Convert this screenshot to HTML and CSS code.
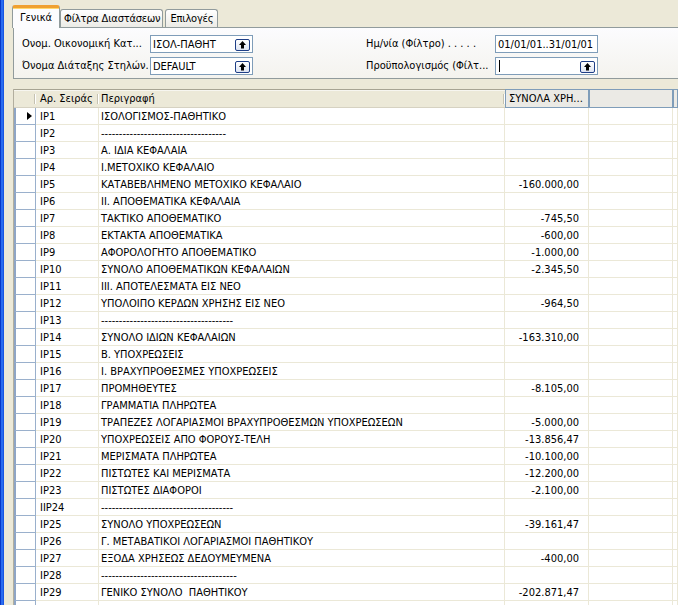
FILE: index.html
```html
<!DOCTYPE html>
<html lang="el">
<head>
<meta charset="utf-8">
<title>Λογαριασμοί</title>
<link rel="stylesheet" href="styles.css">
</head>
<body>
<div class="window">
  <div class="frame-edge"></div>
  <div class="content">
    <div class="tabs">
      <div class="tab active">Γενικά</div>
      <div class="tab">Φίλτρα Διαστάσεων</div>
      <div class="tab tab-opts">Επιλογές</div>
    </div>
    <div class="panel">
      <div class="form">
        <div class="label">Ονομ. Οικονομική Κατ...</div>
        <div class="field"><span>ΙΣΟΛ-ΠΑΘΗΤ</span><span class="lookup"><svg viewBox="0 0 13 10" width="13" height="10"><path d="M6.5 1 L10 5 H8 V8.5 H5 V5 H3 Z" fill="#000"/></svg></span></div>
        <div></div>
        <div class="label">Ημ/νία (Φίλτρο) . . . . .</div>
        <div class="field"><span>01/01/01..31/01/01</span></div>
        <div class="label">Όνομα Διάταξης Στηλών.</div>
        <div class="field"><span>DEFAULT</span><span class="lookup"><svg viewBox="0 0 13 10" width="13" height="10"><path d="M6.5 1 L10 5 H8 V8.5 H5 V5 H3 Z" fill="#000"/></svg></span></div>
        <div></div>
        <div class="label">Προϋπολογισμός (Φίλτ...</div>
        <div class="field"><span class="caret"></span><span class="lookup"><svg viewBox="0 0 13 10" width="13" height="10"><path d="M6.5 1 L10 5 H8 V8.5 H5 V5 H3 Z" fill="#000"/></svg></span></div>
      </div>
    </div>

    <div class="grid">
      <div class="row head">
        <div class="hc"><span></span><span class="sep"></span></div>
        <div class="hc"><span>Αρ. Σειράς</span><span class="sep"></span></div>
        <div class="hc"><span>Περιγραφή</span><span class="sep"></span></div>
        <div class="hbox">ΣΥΝΟΛΑ ΧΡΗ...</div>
        <div class="hbox"></div>
        <div class="hbox"></div>
      </div>

      <div class="row"><div class="sel current"><span class="marker"></span></div><div class="c">IP1</div><div class="c">ΙΣΟΛΟΓΙΣΜΟΣ-ΠΑΘΗΤΙΚΟ</div><div class="c num"></div><div class="c"></div><div class="c"></div></div>
      <div class="row"><div class="sel"></div><div class="c">IP2</div><div class="c">-----------------------------------</div><div class="c num"></div><div class="c"></div><div class="c"></div></div>
      <div class="row"><div class="sel"></div><div class="c">IP3</div><div class="c">Α. ΙΔΙΑ ΚΕΦΑΛΑΙΑ</div><div class="c num"></div><div class="c"></div><div class="c"></div></div>
      <div class="row"><div class="sel"></div><div class="c">IP4</div><div class="c">Ι.ΜΕΤΟΧΙΚΟ ΚΕΦΑΛΑΙΟ</div><div class="c num"></div><div class="c"></div><div class="c"></div></div>
      <div class="row"><div class="sel"></div><div class="c">IP5</div><div class="c">ΚΑΤΑΒΕΒΛΗΜΕΝΟ ΜΕΤΟΧΙΚΟ ΚΕΦΑΛΑΙΟ</div><div class="c num">-160.000,00</div><div class="c"></div><div class="c"></div></div>
      <div class="row"><div class="sel"></div><div class="c">IP6</div><div class="c">ΙΙ. ΑΠΟΘΕΜΑΤΙΚΑ ΚΕΦΑΛΑΙΑ</div><div class="c num"></div><div class="c"></div><div class="c"></div></div>
      <div class="row"><div class="sel"></div><div class="c">IP7</div><div class="c">ΤΑΚΤΙΚΟ ΑΠΟΘΕΜΑΤΙΚΟ</div><div class="c num">-745,50</div><div class="c"></div><div class="c"></div></div>
      <div class="row"><div class="sel"></div><div class="c">IP8</div><div class="c">ΕΚΤΑΚΤΑ ΑΠΟΘΕΜΑΤΙΚΑ</div><div class="c num">-600,00</div><div class="c"></div><div class="c"></div></div>
      <div class="row"><div class="sel"></div><div class="c">IP9</div><div class="c">ΑΦΟΡΟΛΟΓΗΤΟ ΑΠΟΘΕΜΑΤΙΚΟ</div><div class="c num">-1.000,00</div><div class="c"></div><div class="c"></div></div>
      <div class="row"><div class="sel"></div><div class="c">IP10</div><div class="c">ΣΥΝΟΛΟ ΑΠΟΘΕΜΑΤΙΚΩΝ ΚΕΦΑΛΑΙΩΝ</div><div class="c num">-2.345,50</div><div class="c"></div><div class="c"></div></div>
      <div class="row"><div class="sel"></div><div class="c">IP11</div><div class="c">ΙΙΙ. ΑΠΟΤΕΛΕΣΜΑΤΑ ΕΙΣ ΝΕΟ</div><div class="c num"></div><div class="c"></div><div class="c"></div></div>
      <div class="row"><div class="sel"></div><div class="c">IP12</div><div class="c">ΥΠΟΛΟΙΠΟ ΚΕΡΔΩΝ ΧΡΗΣΗΣ ΕΙΣ ΝΕΟ</div><div class="c num">-964,50</div><div class="c"></div><div class="c"></div></div>
      <div class="row"><div class="sel"></div><div class="c">IP13</div><div class="c">-------------------------------------</div><div class="c num"></div><div class="c"></div><div class="c"></div></div>
      <div class="row"><div class="sel"></div><div class="c">IP14</div><div class="c">ΣΥΝΟΛΟ ΙΔΙΩΝ ΚΕΦΑΛΑΙΩΝ</div><div class="c num">-163.310,00</div><div class="c"></div><div class="c"></div></div>
      <div class="row"><div class="sel"></div><div class="c">IP15</div><div class="c">Β. ΥΠΟΧΡΕΩΣΕΙΣ</div><div class="c num"></div><div class="c"></div><div class="c"></div></div>
      <div class="row"><div class="sel"></div><div class="c">IP16</div><div class="c">Ι. ΒΡΑΧΥΠΡΟΘΕΣΜΕΣ ΥΠΟΧΡΕΩΣΕΙΣ</div><div class="c num"></div><div class="c"></div><div class="c"></div></div>
      <div class="row"><div class="sel"></div><div class="c">IP17</div><div class="c">ΠΡΟΜΗΘΕΥΤΕΣ</div><div class="c num">-8.105,00</div><div class="c"></div><div class="c"></div></div>
      <div class="row"><div class="sel"></div><div class="c">IP18</div><div class="c">ΓΡΑΜΜΑΤΙΑ ΠΛΗΡΩΤΕΑ</div><div class="c num"></div><div class="c"></div><div class="c"></div></div>
      <div class="row"><div class="sel"></div><div class="c">IP19</div><div class="c">ΤΡΑΠΕΖΕΣ ΛΟΓΑΡΙΑΣΜΟΙ ΒΡΑΧΥΠΡΟΘΕΣΜΩΝ ΥΠΟΧΡΕΩΣΕΩΝ</div><div class="c num">-5.000,00</div><div class="c"></div><div class="c"></div></div>
      <div class="row"><div class="sel"></div><div class="c">IP20</div><div class="c">ΥΠΟΧΡΕΩΣΕΙΣ ΑΠΟ ΦΟΡΟΥΣ-ΤΕΛΗ</div><div class="c num">-13.856,47</div><div class="c"></div><div class="c"></div></div>
      <div class="row"><div class="sel"></div><div class="c">IP21</div><div class="c">ΜΕΡΙΣΜΑΤΑ ΠΛΗΡΩΤΕΑ</div><div class="c num">-10.100,00</div><div class="c"></div><div class="c"></div></div>
      <div class="row"><div class="sel"></div><div class="c">IP22</div><div class="c">ΠΙΣΤΩΤΕΣ ΚΑΙ ΜΕΡΙΣΜΑΤΑ</div><div class="c num">-12.200,00</div><div class="c"></div><div class="c"></div></div>
      <div class="row"><div class="sel"></div><div class="c">IP23</div><div class="c">ΠΙΣΤΩΤΕΣ ΔΙΑΦΟΡΟΙ</div><div class="c num">-2.100,00</div><div class="c"></div><div class="c"></div></div>
      <div class="row"><div class="sel"></div><div class="c">IIP24</div><div class="c">-------------------------------------</div><div class="c num"></div><div class="c"></div><div class="c"></div></div>
      <div class="row"><div class="sel"></div><div class="c">IP25</div><div class="c">ΣΥΝΟΛΟ ΥΠΟΧΡΕΩΣΕΩΝ</div><div class="c num">-39.161,47</div><div class="c"></div><div class="c"></div></div>
      <div class="row"><div class="sel"></div><div class="c">IP26</div><div class="c">Γ. ΜΕΤΑΒΑΤΙΚΟΙ ΛΟΓΑΡΙΑΣΜΟΙ ΠΑΘΗΤΙΚΟΥ</div><div class="c num"></div><div class="c"></div><div class="c"></div></div>
      <div class="row"><div class="sel"></div><div class="c">IP27</div><div class="c">ΕΞΟΔΑ ΧΡΗΣΕΩΣ ΔΕΔΟΥΜΕΥΜΕΝΑ</div><div class="c num">-400,00</div><div class="c"></div><div class="c"></div></div>
      <div class="row"><div class="sel"></div><div class="c">IP28</div><div class="c">--------------------------------------</div><div class="c num"></div><div class="c"></div><div class="c"></div></div>
      <div class="row"><div class="sel"></div><div class="c">IP29</div><div class="c">ΓΕΝΙΚΟ ΣΥΝΟΛΟ&nbsp; ΠΑΘΗΤΙΚΟΥ</div><div class="c num">-202.871,47</div><div class="c"></div><div class="c"></div></div>
      <div class="row"><div class="sel"></div><div class="c"></div><div class="c"></div><div class="c num"></div><div class="c"></div><div class="c"></div></div>
    </div>
  </div>
</div>
</body>
</html>
```

FILE: styles.css
```css
html, body {
  margin: 0;
  padding: 0;
}

body {
  width: 678px;
  height: 605px;
  overflow: hidden;
  background: #ECE9D8;
  color: #000;
  font-family: "DejaVu Sans Condensed", "DejaVu Sans", "Liberation Sans", sans-serif;
  font-stretch: condensed;
  font-size: 11px;
}

.window {
  display: flex;
  height: 605px;
}

.frame-edge {
  flex: none;
  width: 4px;
  background: linear-gradient(90deg, #0838C8 0, #0838C8 1px, #2A6CF0 1px, #2A6CF0 3px, #1856E2 3px);
}

.content {
  flex: 1;
  min-width: 0;
  padding: 5px 0 0 9px;
}

/* Tabs */
.tabs {
  display: flex;
  align-items: flex-end;
  height: 23px;
  margin: 0 0 -1px -1px;
}

.tab {
  box-sizing: border-box;
  height: 18px;
  margin: 0 1px 1px 0;
  padding: 2px 2px 0 3px;
  border: 1px solid #919B9C;
  border-bottom: none;
  border-radius: 3px 3px 0 0;
  background: linear-gradient(#FFFFFF, #ECEBE6);
  line-height: 14px;
  white-space: nowrap;
  letter-spacing: -0.2px;
}

.tab.active {
  position: relative;
  z-index: 1;
  height: 23px;
  margin: 0;
  padding: 3px 7px 0 7px;
  border-top: 3px solid #F0A030;
  box-shadow: inset 0 1px 0 #FFD86E;
  border-radius: 3px 3px 0 0;
  background: #FCFCFE;
  letter-spacing: 0;
}

.tab-opts {
  margin-left: 1px;
  padding: 2px 4px 0 4px;
}

/* Panel */
.panel {
  box-sizing: border-box;
  height: 52px;
  border: 1px solid #919B9C;
  border-right: none;
  background: linear-gradient(#FCFCFE, #F4F3EE);
  padding: 7px 0 0 8px;
}

.form {
  display: grid;
  grid-template-columns: 128px 103px 113px 129px 103px;
  grid-auto-rows: 18px;
  row-gap: 4px;
}

.label {
  line-height: 18px;
  white-space: nowrap;
  overflow: hidden;
}

.field {
  box-sizing: border-box;
  height: 18px;
  border: 1px solid #7F9DB9;
  background: #FFFFFF;
  display: flex;
  align-items: center;
  justify-content: space-between;
  padding: 0 2px 0 2px;
  white-space: nowrap;
}

.lookup {
  box-sizing: border-box;
  width: 15px;
  height: 12px;
  margin-top: 2px;
  border: 1px solid #1E3E86;
  border-radius: 2px;
  background: linear-gradient(#FFFFFF, #DDE4F2);
  display: flex;
}

.lookup svg {
  display: block;
}

.caret {
  width: 0;
  height: 12px;
  margin-left: 1px;
  border-left: 1px solid #000;
}

/* Grid */
.grid {
  margin-top: 10px;
  border-left: 1px solid #B2AE9E;
  background: #FFFFFF;
}

.row {
  display: grid;
  grid-template-columns: 22px 63px 406px 84px 84px 1fr;
  height: 17px;
}

.row.head {
  height: 19px;
  background: #ECE9D8;
}

.hc {
  box-sizing: border-box;
  border-top: 1px solid #A7A493;
  border-bottom: 1px solid #D6D2C2;
  box-shadow: inset 0 1px 0 #F7F6F0;
  display: flex;
  align-items: center;
  justify-content: space-between;
  padding-left: 4px;
  white-space: nowrap;
}

.hc:nth-child(3) {
  padding-left: 2px;
}

.sep {
  flex: none;
  width: 0;
  height: 10px;
  border-left: 1px solid #C5C2B2;
  border-right: 1px solid #FFFFFF;
}

.hbox {
  box-sizing: border-box;
  border: 1px solid #7F9DB9;
  background: #EBEAE5;
  padding: 0 0 0 3px;
  line-height: 17px;
  white-space: nowrap;
  overflow: hidden;
}

.sel {
  box-sizing: border-box;
  border-left: 2px solid #8EA5C5;
  border-right: 1px solid #9AB0CC;
  border-bottom: 1px solid #9AB0CC;
  display: flex;
  align-items: center;
  justify-content: flex-end;
  padding-right: 3px;
}

.marker {
  width: 0;
  height: 0;
  border-left: 5px solid #000;
  border-top: 4px solid transparent;
  border-bottom: 4px solid transparent;
}

.c {
  box-sizing: border-box;
  border-right: 1px solid #EBE8D7;
  border-bottom: 1px solid #EBE8D7;
  line-height: 18px;
  padding-left: 4px;
  white-space: nowrap;
  overflow: hidden;
}

.c:nth-child(3) {
  padding-left: 2px;
}

.c.num {
  text-align: right;
  padding: 0 9px 0 0;
}
```
